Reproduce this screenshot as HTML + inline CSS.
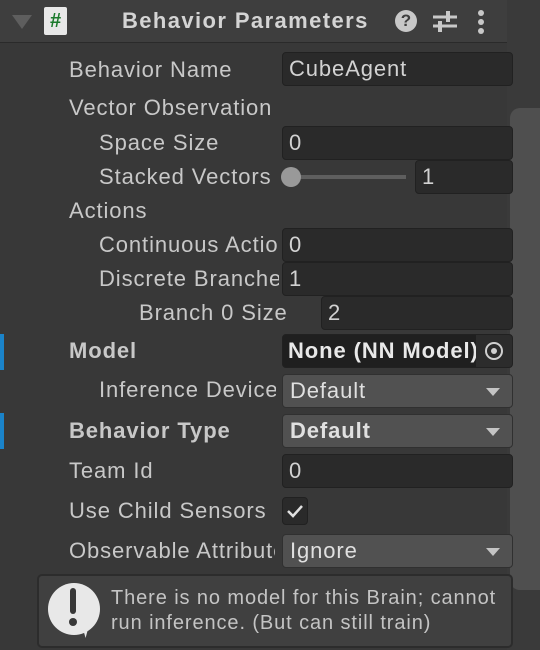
<!DOCTYPE html><html><head><style>
body{margin:0;width:540px;height:650px;background:#383838;overflow:hidden;font-family:"Liberation Sans","DejaVu Sans",sans-serif;color:#c8c8c8;position:relative}
.a{position:absolute}
.l{position:absolute;font-size:22px;line-height:30px;white-space:nowrap;overflow:hidden;letter-spacing:0.9px}
.f{position:absolute;left:282px;width:231px;height:34px;background:#2a2a2a;border:1px solid #212121;border-radius:4px;box-sizing:border-box;font-size:22px;line-height:32px;padding-left:6px;color:#d2d2d2;overflow:hidden;white-space:nowrap;letter-spacing:0.9px}
.d{position:absolute;left:282px;width:231px;height:34px;background:#515151;border:1px solid #303030;border-radius:4px;box-sizing:border-box;font-size:22px;line-height:31px;padding-left:7px;color:#e0e0e0;letter-spacing:0.9px}
.d:after{content:"";position:absolute;right:12px;top:13px;border-left:7px solid transparent;border-right:7px solid transparent;border-top:8px solid #c4c4c4}
b{font-weight:bold}
</style></head><body>
<div class="a" style="left:0;top:0;width:507px;height:42px;background:#3e3e3e;border-bottom:1px solid #2a2a2a"></div>
<div class="a" style="left:12px;top:15px;border-left:10px solid transparent;border-right:10px solid transparent;border-top:14px solid #5e5e5e"></div>
<div class="a" style="left:44px;top:7px;width:23px;height:28px;background:#e8e8e8;border-radius:2px;color:#1b7a2c;font-weight:bold;font-size:20px;text-align:center;line-height:28px">#</div>
<div class="l" style="left:122px;top:6px;font-weight:bold;color:#d4d4d4;letter-spacing:1.4px">Behavior Parameters</div>
<div class="a" style="left:395px;top:10px;width:22px;height:22px;border-radius:50%;background:#c8c8c8;color:#3e3e3e;font-weight:bold;font-size:17px;text-align:center;line-height:22px">?</div>
<svg class="a" style="left:433px;top:10px" width="24" height="22"><g stroke="#c8c8c8" stroke-width="3"><line x1="0" y1="7" x2="24" y2="7"/><line x1="0" y1="16" x2="24" y2="16"/></g><rect x="13" y="1" width="4" height="11" fill="#c8c8c8"/><rect x="5" y="11" width="4" height="11" fill="#c8c8c8"/></svg>
<div class="a" style="left:478px;top:10px;width:6px;height:24px"><div style="width:6px;height:6px;border-radius:50%;background:#c8c8c8;margin-bottom:3px"></div><div style="width:6px;height:6px;border-radius:50%;background:#c8c8c8;margin-bottom:3px"></div><div style="width:6px;height:6px;border-radius:50%;background:#c8c8c8"></div></div>
<div class="a" style="left:507px;top:0;width:33px;height:650px;background:#3a3a3a"></div>
<div class="a" style="left:510px;top:108px;width:30px;height:482px;background:#4f4f4f;border-radius:10px 0 0 10px"></div>

<div class="l" style="left:69px;top:55px">Behavior Name</div><div class="f" style="top:52px">CubeAgent</div>
<div class="l" style="left:69px;top:93px">Vector Observation</div>
<div class="l" style="left:99px;top:128px">Space Size</div><div class="f" style="top:126px">0</div>
<div class="l" style="left:99px;top:162px;width:176px">Stacked Vectors</div>
<div class="a" style="left:290px;top:175px;width:116px;height:4px;background:#5e5e5e"></div>
<div class="a" style="left:281px;top:167px;width:20px;height:20px;border-radius:50%;background:#999"></div>
<div class="f" style="top:160px;left:415px;width:98px">1</div>
<div class="l" style="left:69px;top:196px">Actions</div>
<div class="l" style="left:99px;top:230px;width:180px">Continuous Actions</div><div class="f" style="top:228px">0</div>
<div class="l" style="left:99px;top:264px;width:180px">Discrete Branches</div><div class="f" style="top:262px">1</div>
<div class="l" style="left:139px;top:298px">Branch 0 Size</div><div class="f" style="top:296px;left:321px;width:192px">2</div>
<div class="a" style="left:0;top:334px;width:4px;height:36px;background:#1a83c9"></div>
<div class="l" style="left:69px;top:336px"><b>Model</b></div>
<div class="f" style="top:334px;background:#1f1f1f;font-weight:bold;color:#e8e8e8;padding-left:5px">None (NN Model)<div class="a" style="right:0;top:0;width:36px;height:32px;background:#2c2c2c"></div><div class="a" style="right:9px;top:7px;width:14px;height:14px;border:2px solid #d0d0d0;border-radius:50%"><div style="margin:4px;width:6px;height:6px;background:#d0d0d0;border-radius:50%"></div></div></div>
<div class="l" style="left:99px;top:375px;width:177px">Inference Device</div><div class="d" style="top:374px">Default</div>
<div class="a" style="left:0;top:413px;width:4px;height:36px;background:#1a83c9"></div>
<div class="l" style="left:69px;top:416px"><b>Behavior Type</b></div><div class="d" style="top:414px;font-weight:bold">Default</div>
<div class="l" style="left:69px;top:456px">Team Id</div><div class="f" style="top:454px">0</div>
<div class="l" style="left:69px;top:496px">Use Child Sensors</div>
<div class="a" style="left:282px;top:497px;width:26px;height:28px;background:#2a2a2a;border:1px solid #212121;border-radius:4px;box-sizing:border-box"><svg width="24" height="26"><path d="M5 13 L10 18 L19 8" stroke="#e0e0e0" stroke-width="2.5" fill="none"/></svg></div>
<div class="l" style="left:69px;top:536px;width:206px">Observable Attributes</div><div class="d" style="top:534px">Ignore</div>
<div class="a" style="left:37px;top:574px;width:476px;height:74px;background:#404040;border:2px solid #2c2c2c;border-radius:5px;box-sizing:border-box"></div>
<div class="a" style="left:48px;top:583px;width:52px;height:52px;border-radius:50%;background:#e8e8e8"></div>
<div class="a" style="left:78px;top:620px;border-left:10px solid transparent;border-top:18px solid #e8e8e8;transform:skewX(-15deg)"></div>
<div class="a" style="left:70px;top:588px;width:6px;height:26px;background:#383838;border-radius:3px"></div>
<div class="a" style="left:69px;top:618px;width:8px;height:8px;background:#383838;border-radius:50%"></div>
<div class="a" style="left:111px;top:586px;font-size:20px;line-height:25px;color:#c4c4c4;letter-spacing:0.9px;white-space:nowrap">There is no model for this Brain; cannot<br>run inference. (But can still train)</div>
</body></html>
